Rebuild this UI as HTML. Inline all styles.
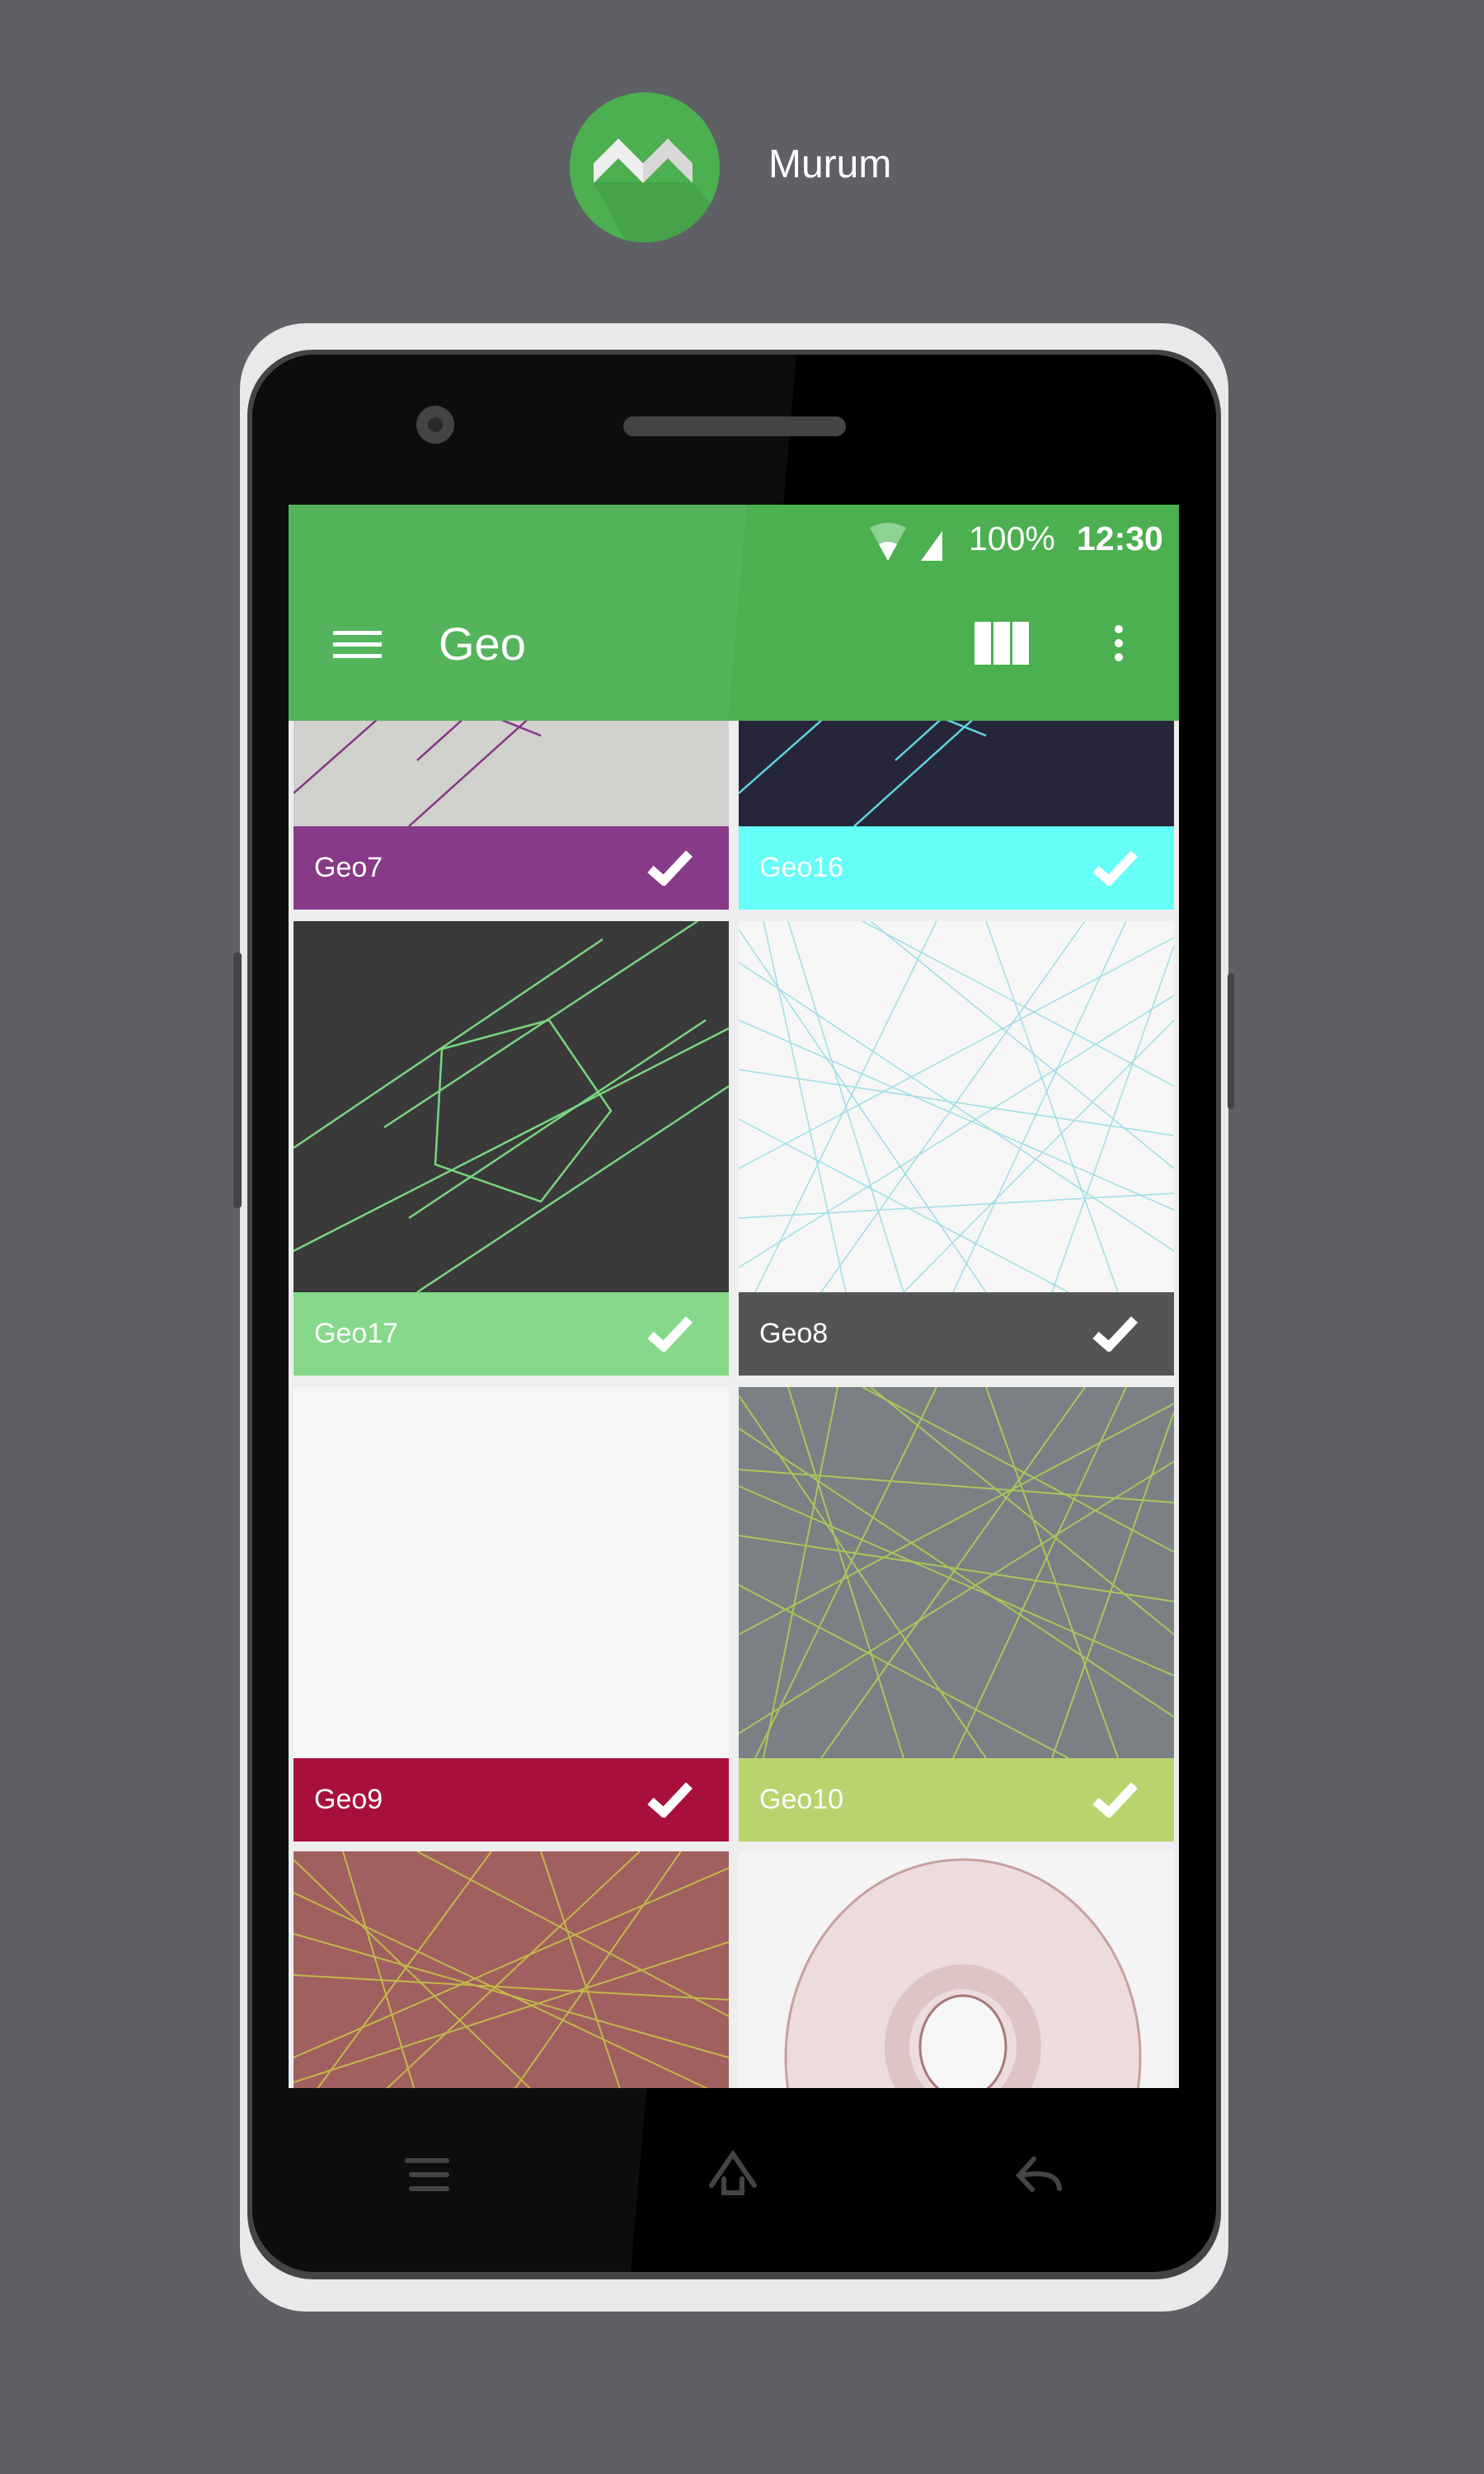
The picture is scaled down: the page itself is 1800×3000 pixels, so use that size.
<!DOCTYPE html>
<html><head><meta charset="utf-8"><style>
*{margin:0;padding:0;box-sizing:border-box}
body{width:1800px;height:3000px;background:#5f6066;position:relative;overflow:hidden;font-family:"Liberation Sans",sans-serif}
.abs{position:absolute}
.lbl{position:absolute;height:101px;color:#fff;font-size:34px;line-height:101px;padding-left:25px;font-family:"Liberation Sans Narrow","Liberation Sans",sans-serif}
.lbl svg{position:absolute;right:42px;top:28px}
.img{position:absolute;overflow:hidden}
</style></head><body>
<!-- logo -->
<svg class="abs" style="left:690px;top:111px" width="184" height="184" viewBox="0 0 184 184">
<defs><clipPath id="c"><circle cx="92" cy="92" r="91"/></clipPath></defs>
<circle cx="92" cy="92" r="91" fill="#4caf50"/>
<g clip-path="url(#c)"><polygon points="30,110 90,110 150,110 200,170 160,240 90,220" fill="#43a047" opacity=".8"/></g>
<polygon points="30,87 60,57 90,87 90,111 60,81 30,111" fill="#eeeeee"/>
<polygon points="90,87 120,57 150,87 150,111 120,81 90,111" fill="#d8d8d8"/>
</svg>
<div class="abs" style="left:932px;top:172px;font-size:48px;color:#fff">Murum</div>

<!-- phone -->
<div class="abs" style="left:291px;top:392px;width:1199px;height:2411px;background:#e8eaea;border-radius:80px"></div>
<div class="abs" style="left:300px;top:424px;width:1181px;height:2340px;background:#444;border-radius:80px"></div>
<div class="abs" style="left:306px;top:430px;width:1169px;height:2325px;border-radius:76px;overflow:hidden;background:#000">
  <div class="abs" style="left:0;top:0;width:1169px;height:2325px;background:#0d0d0d;clip-path:polygon(0 0,660px 0,459px 2325px,0 2325px)"></div>
</div>
<div class="abs" style="left:505px;top:492px;width:46px;height:46px;border-radius:50%;background:#444"></div>
<div class="abs" style="left:519px;top:506px;width:18px;height:18px;border-radius:50%;background:#2a2a2a"></div>
<div class="abs" style="left:756px;top:505px;width:270px;height:24px;border-radius:12px;background:#444"></div>
<div class="abs" style="left:283px;top:1155px;width:10px;height:310px;background:#444;border-radius:4px"></div>
<div class="abs" style="left:1489px;top:1180px;width:8px;height:165px;background:#444;border-radius:4px"></div>

<!-- nav buttons -->
<svg class="abs" style="left:0;top:2580px" width="1800" height="100" viewBox="0 2580 1800 100" fill="none" stroke="#444" stroke-width="6" stroke-linecap="round">
<line x1="494" y1="2620" x2="542" y2="2620"/><line x1="499" y1="2637" x2="542" y2="2637"/><line x1="499" y1="2654" x2="542" y2="2654"/>
<path d="M863 2650 L889 2612 L915 2650 M878 2642 V2659 H900 V2642"/>
<path d="M1254 2618 L1236 2638 L1252 2655 M1238 2638 Q1283 2630 1285 2654"/>
</svg>

<!-- screen -->
<div class="abs" style="left:350px;top:612px;width:1080px;height:1920px;background:#eeeeee;overflow:hidden">
  <div class="abs" style="left:0;top:262px;width:1080px;height:1658px;overflow:hidden">
    <!-- row1 -->
    <div class="img" style="left:6px;top:-62px;width:528px;height:190px;background:#d0d0cc">
      <svg width="528" height="190"><g stroke="#86378a" stroke-width="2.5"><line x1="0" y1="150" x2="170" y2="0"/><line x1="150" y1="110" x2="250" y2="20"/><line x1="140" y1="190" x2="340" y2="10"/><line x1="250" y1="60" x2="300" y2="80"/></g></svg>
    </div>
    <div class="lbl" style="left:6px;top:128px;width:528px;background:#873a87">Geo7<svg width="58" height="44"><path d="M5 24 L21 38 L52 5" stroke="#fff" stroke-width="11" fill="none"/></svg></div>
    <div class="img" style="left:546px;top:-62px;width:528px;height:190px;background:#27253a">
      <svg width="528" height="190"><g stroke="#5fd6dc" stroke-width="2.5"><line x1="0" y1="150" x2="170" y2="0"/><line x1="190" y1="110" x2="290" y2="20"/><line x1="140" y1="190" x2="340" y2="10"/><line x1="250" y1="60" x2="300" y2="80"/></g></svg>
    </div>
    <div class="lbl" style="left:546px;top:128px;width:528px;background:#66fff8">Geo16<svg width="58" height="44"><path d="M5 24 L21 38 L52 5" stroke="#fff" stroke-width="11" fill="none"/></svg></div>
    <!-- row2 -->
    <div class="img" style="left:6px;top:243px;width:528px;height:450px;background:#3a3a3a">
      <svg width="528" height="450"><g stroke="#7ad67f" stroke-width="2.5" fill="none"><line x1="0" y1="275" x2="375" y2="22"/><line x1="110" y1="250" x2="490" y2="0"/><line x1="0" y1="400" x2="528" y2="130"/><line x1="140" y1="360" x2="500" y2="120"/><line x1="150" y1="450" x2="528" y2="200"/><polygon points="180,155 310,120 385,230 300,340 172,295"/></g></svg>
    </div>
    <div class="lbl" style="left:6px;top:693px;width:528px;background:#86d98a">Geo17<svg width="58" height="44"><path d="M5 24 L21 38 L52 5" stroke="#fff" stroke-width="11" fill="none"/></svg></div>
    <div class="img" style="left:546px;top:243px;width:528px;height:450px;background:#f6f6f6">
      <svg width="528" height="450"><g stroke="#9fdde6" stroke-width="1.5"><line x1="0" y1="50" x2="528" y2="400"/><line x1="0" y1="300" x2="528" y2="20"/><line x1="60" y1="0" x2="200" y2="450"/><line x1="300" y1="0" x2="460" y2="450"/><line x1="0" y1="180" x2="528" y2="260"/><line x1="100" y1="450" x2="420" y2="0"/><line x1="0" y1="420" x2="528" y2="90"/><line x1="240" y1="0" x2="20" y2="450"/><line x1="528" y1="200" x2="150" y2="0"/><line x1="528" y1="350" x2="0" y2="120"/><line x1="380" y1="450" x2="528" y2="30"/><line x1="0" y1="10" x2="300" y2="450"/><line x1="160" y1="0" x2="528" y2="300"/><line x1="0" y1="240" x2="400" y2="450"/><line x1="470" y1="0" x2="260" y2="450"/><line x1="0" y1="360" x2="528" y2="330"/><line x1="30" y1="0" x2="130" y2="450"/><line x1="528" y1="120" x2="200" y2="450"/></g></svg>
    </div>
    <div class="lbl" style="left:546px;top:693px;width:528px;background:#545454">Geo8<svg width="58" height="44"><path d="M5 24 L21 38 L52 5" stroke="#fff" stroke-width="11" fill="none"/></svg></div>
    <!-- row3 -->
    <div class="img" style="left:6px;top:808px;width:528px;height:450px;background:#f6f6f6"></div>
    <div class="lbl" style="left:6px;top:1258px;width:528px;background:#a8103b">Geo9<svg width="58" height="44"><path d="M5 24 L21 38 L52 5" stroke="#fff" stroke-width="11" fill="none"/></svg></div>
    <div class="img" style="left:546px;top:808px;width:528px;height:450px;background:#7b8084">
      <svg width="528" height="450"><g stroke="#a9c75a" stroke-width="2"><line x1="0" y1="50" x2="528" y2="400"/><line x1="0" y1="300" x2="528" y2="20"/><line x1="60" y1="0" x2="200" y2="450"/><line x1="300" y1="0" x2="460" y2="450"/><line x1="0" y1="180" x2="528" y2="260"/><line x1="100" y1="450" x2="420" y2="0"/><line x1="0" y1="420" x2="528" y2="90"/><line x1="240" y1="0" x2="20" y2="450"/><line x1="528" y1="200" x2="150" y2="0"/><line x1="528" y1="350" x2="0" y2="120"/><line x1="380" y1="450" x2="528" y2="30"/><line x1="0" y1="10" x2="300" y2="450"/><line x1="160" y1="0" x2="528" y2="300"/><line x1="0" y1="240" x2="400" y2="450"/><line x1="470" y1="0" x2="260" y2="450"/><line x1="0" y1="100" x2="528" y2="140"/><line x1="30" y1="450" x2="120" y2="0"/></g></svg>
    </div>
    <div class="lbl" style="left:546px;top:1258px;width:528px;background:#b8d46e">Geo10<svg width="58" height="44"><path d="M5 24 L21 38 L52 5" stroke="#fff" stroke-width="11" fill="none"/></svg></div>
    <!-- row4 -->
    <div class="img" style="left:6px;top:1371px;width:528px;height:300px;background:#a0605f">
      <svg width="528" height="300"><g stroke="#c3b84a" stroke-width="2"><line x1="0" y1="50" x2="528" y2="300"/><line x1="0" y1="250" x2="528" y2="20"/><line x1="60" y1="0" x2="150" y2="300"/><line x1="300" y1="0" x2="400" y2="300"/><line x1="0" y1="150" x2="528" y2="180"/><line x1="100" y1="300" x2="420" y2="0"/><line x1="240" y1="0" x2="20" y2="300"/><line x1="528" y1="200" x2="150" y2="0"/><line x1="528" y1="250" x2="0" y2="100"/><line x1="0" y1="10" x2="300" y2="300"/><line x1="470" y1="0" x2="260" y2="300"/><line x1="0" y1="280" x2="528" y2="110"/></g></svg>
    </div>
    <div class="img" style="left:546px;top:1371px;width:528px;height:300px;background:#f4f4f4">
      <svg width="528" height="300"><ellipse cx="272" cy="250" rx="215" ry="240" fill="#ecdcdc" stroke="#c7a0a0" stroke-width="3"/><ellipse cx="272" cy="237" rx="80" ry="85" fill="none" stroke="#d6b4b4" stroke-width="30" opacity=".6"/><ellipse cx="272" cy="237" rx="52" ry="62" fill="#f6f6f6" stroke="#a87878" stroke-width="3"/></svg>
    </div>
  </div>
  <!-- status + toolbar -->
  <div class="abs" style="left:0;top:0;width:1080px;height:262px;background:#4caf50"></div>
  <div class="abs" style="left:0;top:0;width:1080px;height:262px;background:#54b45c;clip-path:polygon(0 0,556px 0,533px 262px,0 262px)"></div>
  <svg class="abs" style="left:705px;top:18px" width="120" height="60"><path d="M0 10 Q22 -2 44 10 L22 50 Z" fill="#8fd093"/><path d="M11 30 Q22 24 33 30 L22 50Z" fill="#fff"/><polygon points="62,50 88,50 88,14" fill="#fff"/></svg>
  <div class="abs" style="left:825px;top:18px;font-size:41px;color:#fff;line-height:46px">100%</div>
  <div class="abs" style="left:956px;top:18px;font-size:41px;color:#fff;font-weight:bold;line-height:46px">12:30</div>
  <div class="abs" style="left:54px;top:153px;width:59px;height:5px;background:#fff"></div>
  <div class="abs" style="left:54px;top:167px;width:59px;height:5px;background:#fff"></div>
  <div class="abs" style="left:54px;top:181px;width:59px;height:5px;background:#fff"></div>
  <div class="abs" style="left:182px;top:137px;font-size:56px;color:#fff;line-height:64px">Geo</div>
  <div class="abs" style="left:832px;top:142px;width:20px;height:52px;background:#fff"></div>
  <div class="abs" style="left:855px;top:142px;width:20px;height:52px;background:#fff"></div>
  <div class="abs" style="left:878px;top:142px;width:20px;height:52px;background:#fff"></div>
  <div class="abs" style="left:1002px;top:146px;width:10px;height:10px;border-radius:50%;background:#fff"></div>
  <div class="abs" style="left:1002px;top:163px;width:10px;height:10px;border-radius:50%;background:#fff"></div>
  <div class="abs" style="left:1002px;top:180px;width:10px;height:10px;border-radius:50%;background:#fff"></div>
</div>
</body></html>
